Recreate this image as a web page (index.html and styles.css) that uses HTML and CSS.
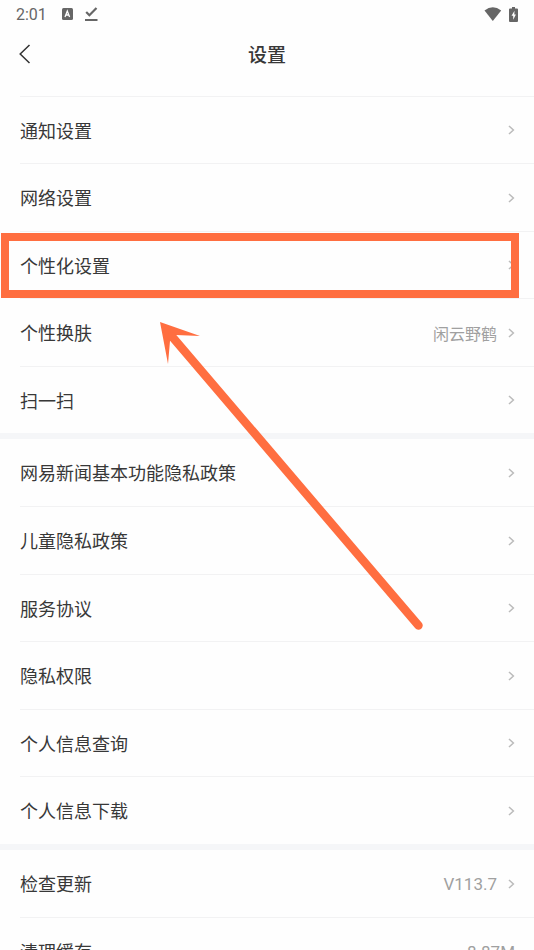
FILE: index.html
```html
<!DOCTYPE html>
<html lang="zh-CN">
<head>
<meta charset="utf-8">
<meta name="viewport" content="width=device-width, initial-scale=1">
<title>设置</title>
<link rel="stylesheet" href="styles.css">
</head>
<body>
<svg class="defs" width="0" height="0" aria-hidden="true">
  <symbol id="chevron" viewBox="0 0 7 10"><path d="M1 1L5.400 5L1 9" fill="none" stroke="currentColor" stroke-width="1.500"/></symbol>
</svg>
<div class="screen">
  <div class="status">
    <time>2:01</time>
    <svg class="badge" width="11" height="12" viewBox="0 0 11 12" aria-hidden="true">
      <rect width="11" height="12" rx="1.500" fill="#666"/>
      <path d="M3 9L5.300 3L7.600 9M3.800 7H6.800" fill="none" stroke="#fff" stroke-width="1.300"/>
    </svg>
    <svg width="13" height="15" viewBox="0 0 13 15" aria-hidden="true">
      <path d="M1.200 5L4.400 8.200L11.500 1" fill="none" stroke="#666" stroke-width="2.200"/>
      <path d="M0 12H12.500V14H0z" fill="#666"/>
    </svg>
    <svg class="wifi" width="18" height="14" viewBox="0 0 18 14" aria-hidden="true">
      <path d="M0.500 3.500Q8.800-3 17.200 3.500L8.800 14z" fill="#666"/>
    </svg>
    <svg width="9" height="15" viewBox="0 0 9 15" aria-hidden="true">
      <path d="M3 0H6V1.500H8Q9 1.500 9 2.500V14Q9 15 8 15H1Q0 15 0 14V2.500Q0 1.500 1 1.500H3z" fill="#666"/>
      <path d="M5.500 3.800L2.500 8.700H4.200V12.800L6.900 7.500H5.300z" fill="#fff"/>
    </svg>
  </div>
  <header class="bar">
    <button class="back" type="button" aria-label="返回">
      <svg width="12" height="20" viewBox="0 0 12 20"><path d="M10.500 1L1.200 10L10.500 19" fill="none" stroke="#333" stroke-width="1.500"/></svg>
    </button>
    <h1>设置</h1>
  </header>
  <main>
    <ul class="group lined">
      <li><a class="row" href="#"><span class="name">通知设置</span><svg class="chevron"><use href="#chevron"/></svg></a></li>
      <li><a class="row" href="#"><span class="name">网络设置</span><svg class="chevron"><use href="#chevron"/></svg></a></li>
      <li class="marked"><a class="row" href="#"><span class="name">个性化设置</span><svg class="chevron"><use href="#chevron"/></svg></a></li>
      <li><a class="row" href="#"><span class="name">个性换肤</span><span class="value">闲云野鹤</span><svg class="chevron"><use href="#chevron"/></svg></a></li>
      <li><a class="row" href="#"><span class="name">扫一扫</span><svg class="chevron"><use href="#chevron"/></svg></a></li>
    </ul>
    <ul class="group">
      <li><a class="row" href="#"><span class="name">网易新闻基本功能隐私政策</span><svg class="chevron"><use href="#chevron"/></svg></a></li>
      <li><a class="row" href="#"><span class="name">儿童隐私政策</span><svg class="chevron"><use href="#chevron"/></svg></a></li>
      <li><a class="row" href="#"><span class="name">服务协议</span><svg class="chevron"><use href="#chevron"/></svg></a></li>
      <li><a class="row" href="#"><span class="name">隐私权限</span><svg class="chevron"><use href="#chevron"/></svg></a></li>
      <li><a class="row" href="#"><span class="name">个人信息查询</span><svg class="chevron"><use href="#chevron"/></svg></a></li>
      <li><a class="row" href="#"><span class="name">个人信息下载</span><svg class="chevron"><use href="#chevron"/></svg></a></li>
    </ul>
    <ul class="group">
      <li><a class="row" href="#"><span class="name">检查更新</span><span class="value number">V113.7</span><svg class="chevron"><use href="#chevron"/></svg></a></li>
      <li><a class="row" href="#"><span class="name">清理缓存</span><span class="value number">8.87M</span></a></li>
    </ul>
  </main>
  <svg class="arrow" width="264" height="310" viewBox="0 0 264 310" aria-hidden="true">
    <path d="M0 0L40 14L16 13L10 19L8 42z" fill="#ff6e40"/>
    <path d="M12 14.500L258.500 303.500" fill="none" stroke="#ff6e40" stroke-width="8.500" stroke-linecap="round"/>
  </svg>
</div>
</body>
</html>
```
FILE: styles.css
```css
*,
*::after {
  box-sizing: border-box;
}

body {
  margin: 0;
  background: #fefefe;
  color: #383838;
  font-family: "Noto Sans CJK SC", sans-serif;
}

.defs {
  position: absolute;
}

.screen {
  position: relative;
  height: 100vh;
  overflow: hidden;
}

.status {
  display: flex;
  align-items: center;
  gap: 12px;
  height: 28px;
  padding: 0 16px;
  color: #666;
  font-family: Roboto, sans-serif;
  font-size: 16px;
}

.badge {
  margin-left: 3px;
}

.wifi {
  margin-left: auto;
  margin-right: -5px;
}

.bar {
  display: grid;
  grid-template-columns: 48px 1fr 48px;
  align-items: center;
  height: 68px;
  padding-bottom: 16px;
}

.back {
  display: flex;
  padding: 0 0 0 19px;
  border: 0;
  background: none;
}

h1 {
  margin: 0;
  text-align: center;
  font-size: 19px;
  font-weight: 500;
  line-height: 28px;
}

.group {
  margin: 0;
  padding: 0 0 0 20px;
  list-style: none;
}

.group + .group {
  border-top: 6px solid #f5f6f8;
}

.group li {
  height: 68px;
  border-top: 1px solid #f2f2f3;
}

.group li:nth-child(odd) {
  height: 67px;
}

.group:not(.lined) li:first-child {
  border-top: 0;
}

.row {
  display: flex;
  align-items: center;
  height: 100%;
  padding-right: 19px;
  color: inherit;
  text-decoration: none;
}

.name {
  flex: 1;
  padding-bottom: 1px;
  font-size: 18px;
  font-weight: 400;
  line-height: 26px;
}

.value {
  color: #a0a0a0;
  font-size: 16px;
  font-weight: 400;
  line-height: 24px;
}

.number {
  font-family: Roboto, sans-serif;
  font-size: 17px;
}

.chevron {
  width: 7px;
  height: 10px;
  margin-left: 11px;
  color: #bbb;
}

.marked {
  position: relative;
}

.marked::after {
  content: "";
  position: absolute;
  top: 1px;
  left: -19px;
  right: 15px;
  height: 65px;
  border: 8px solid #ff6e40;
  pointer-events: none;
}

.arrow {
  position: absolute;
  top: 322px;
  left: 160px;
  pointer-events: none;
}
```
